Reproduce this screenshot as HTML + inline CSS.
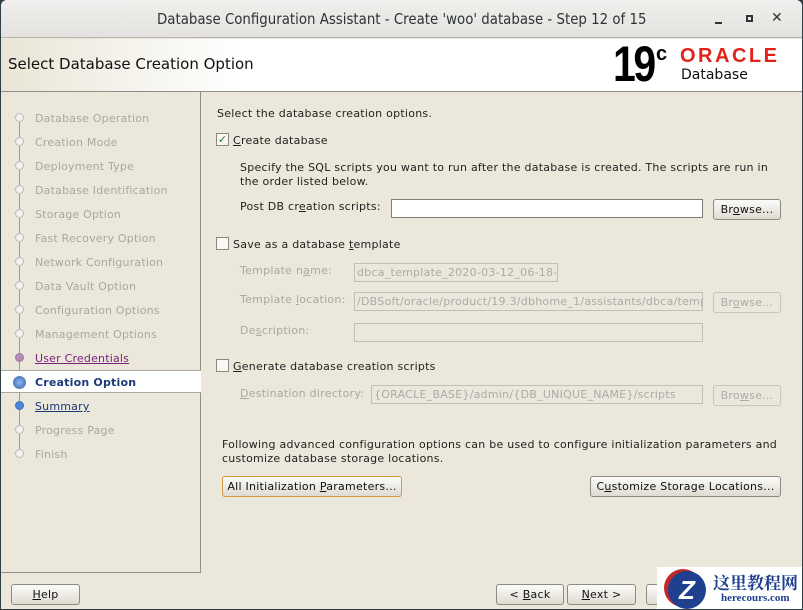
<!DOCTYPE html><html><head><style>
*{box-sizing:border-box;margin:0;padding:0}
body{width:803px;height:610px;background:#2f3f44;font-family:"DejaVu Sans",sans-serif;font-size:11px;color:#222;position:relative;overflow:hidden}
.win{position:absolute;left:1px;top:0;width:801px;height:609px;background:#ebe7da;border-radius:6px 6px 0 0;overflow:hidden}
.title{position:absolute;left:0;top:0;width:801px;height:38px;background:linear-gradient(#f0efed,#e3e2df);border-bottom:1px solid #b5b3ad;font-size:15px;color:#2e3436}
.hdr{position:absolute;left:0;top:39px;width:801px;height:53px;background:linear-gradient(90deg,#e9e5d6,#fff 30%,#fff);border-bottom:1px solid #8e8e8a}
.a{position:absolute;white-space:nowrap}
.c .a,.c .btn,.c .inpd{letter-spacing:0.25px}
.c .a{margin-top:1px}
.left{position:absolute;left:0;top:92px;width:200px;height:481px;border-right:1px solid #8e8e8a;border-bottom:1px solid #8e8e8a}
.step{position:absolute;left:34px;color:#aaa7a0;font-size:11px;letter-spacing:0.2px;margin-top:1px}
.dot{position:absolute;left:14px;width:9px;height:9px;border-radius:50%;border:1px solid #bbb;background:#f4f2ee}
.vline{position:absolute;left:18px;top:27px;width:1px;height:338px;background:#9a9a9a}
.btn{position:absolute;height:21px;border:1px solid #8d8a83;border-radius:3px;background:linear-gradient(#fbfbf9,#dedbd1);text-align:center;line-height:19px;color:#111}
.dis{color:#aaa;border-color:#c8c5bc;background:#ebe7da}
.inp{position:absolute;height:19px;border:1px solid #7f7d77;background:#fff}
.inpd{position:absolute;height:19px;border:1px solid #c2bfb6;color:#aaa;padding-left:2px;line-height:17px;overflow:hidden;white-space:nowrap}
.cb{position:absolute;width:13px;height:13px;border:1px solid #8b8880;background:#f8f7f4}
.g{color:#aaa8a0}
u{text-decoration:underline}
</style></head><body><div class="win">
<div class="title"><div class="a" style="left:156px;top:10px;transform:scaleX(.89);transform-origin:left">Database Configuration Assistant - Create 'woo' database - Step 12 of 15</div>
<div style="position:absolute;left:714px;top:22px;width:7px;height:2px;background:#2e3436"></div>
<div style="position:absolute;left:745px;top:15px;width:7px;height:7px;border:2px solid #2e3436"></div>
<div class="a" style="left:770px;top:10px;font-size:14px">✕</div></div>
<div class="hdr">
<div class="a" style="left:7px;top:16px;font-size:15px;color:#111">Select Database Creation Option</div>
<div class="a" style="left:612px;top:-4px;font-family:'Liberation Sans';font-size:50px;font-weight:bold;letter-spacing:-3px;color:#000;transform:scaleX(.82);transform-origin:left">19</div>
<div class="a" style="left:655px;top:4px;font-family:'Liberation Sans';font-size:20px;font-weight:bold;color:#000">c</div>
<div class="a" style="left:679px;top:6px;font-family:'Liberation Sans';font-size:20px;font-weight:bold;color:#e2231a;letter-spacing:2.5px">ORACLE</div>
<div class="a" style="left:680px;top:28px;font-size:14px;color:#111">Database</div>
</div>
<div class="left">
<div class="vline"></div>
<div class="dot" style="top:21px"></div><div class="step" style="top:19px">Database Operation</div>
<div class="dot" style="top:45px"></div><div class="step" style="top:43px">Creation Mode</div>
<div class="dot" style="top:69px"></div><div class="step" style="top:67px">Deployment Type</div>
<div class="dot" style="top:93px"></div><div class="step" style="top:91px">Database Identification</div>
<div class="dot" style="top:117px"></div><div class="step" style="top:115px">Storage Option</div>
<div class="dot" style="top:141px"></div><div class="step" style="top:139px">Fast Recovery Option</div>
<div class="dot" style="top:165px"></div><div class="step" style="top:163px">Network Configuration</div>
<div class="dot" style="top:189px"></div><div class="step" style="top:187px">Data Vault Option</div>
<div class="dot" style="top:213px"></div><div class="step" style="top:211px">Configuration Options</div>
<div class="dot" style="top:237px"></div><div class="step" style="top:235px">Management Options</div>
<div class="dot" style="top:261px;background:#b58ab5;border-color:#a07aa0"></div><div class="step" style="top:259px;color:#7a1f7a"><u>User Credentials</u></div>
<div style="position:absolute;left:0;top:278px;width:200px;height:23px;background:#fff;border-top:1px solid #a9a7a0;border-bottom:1px solid #a9a7a0"></div>
<div class="dot" style="top:284px;left:12px;width:13px;height:13px;background:radial-gradient(#8fb4ea,#3a6fc0);border-color:#5a7fb0"></div><div class="step" style="top:283px;color:#1b3a78;font-weight:bold">Creation Option</div>
<div class="dot" style="top:309px;background:#4a86d8;border-color:#3a6fc0"></div><div class="step" style="top:307px;color:#1b3a78"><u>Summary</u></div>
<div class="dot" style="top:333px"></div><div class="step" style="top:331px">Progress Page</div>
<div class="dot" style="top:357px"></div><div class="step" style="top:355px">Finish</div>
</div>
<div class="c">
<div class="a" style="left:216px;top:106px">Select the database creation options.</div>
<div class="cb" style="left:215px;top:133px;text-align:center;line-height:11px;color:#2a7a2a;font-size:11px">✓</div>
<div class="a" style="left:232px;top:133px"><u>C</u>reate database</div>
<div class="a" style="left:239px;top:160px;line-height:14px">Specify the SQL scripts you want to run after the database is created. The scripts are run in<br>the order listed below.</div>
<div class="a" style="left:239px;top:199px">Post DB cr<u>e</u>ation scripts:</div>
<div class="inp" style="left:390px;top:199px;width:312px"></div>
<div class="btn" style="left:712px;top:199px;width:68px">Br<u>o</u>wse...</div>
<div class="cb" style="left:215px;top:237px"></div>
<div class="a" style="left:232px;top:237px">Save as a database <u>t</u>emplate</div>
<div class="a g" style="left:239px;top:263px">Template n<u>a</u>me:</div>
<div class="inpd" style="left:353px;top:263px;width:204px">dbca_template_2020-03-12_06-18-4</div>
<div class="a g" style="left:239px;top:292px">Template <u>l</u>ocation:</div>
<div class="inpd" style="left:353px;top:292px;width:349px">/DBSoft/oracle/product/19.3/dbhome_1/assistants/dbca/temp</div>
<div class="btn dis" style="left:712px;top:292px;width:68px">Br<u>o</u>wse...</div>
<div class="a g" style="left:239px;top:323px">De<u>s</u>cription:</div>
<div class="inpd" style="left:353px;top:323px;width:349px"></div>
<div class="cb" style="left:215px;top:359px"></div>
<div class="a" style="left:232px;top:359px"><u>G</u>enerate database creation scripts</div>
<div class="a g" style="left:239px;top:386px"><u>D</u>estination directory:</div>
<div class="inpd" style="left:370px;top:385px;width:332px">{ORACLE_BASE}/admin/{DB_UNIQUE_NAME}/scripts</div>
<div class="btn dis" style="left:712px;top:385px;width:68px">Bro<u>w</u>se...</div>
<div class="a" style="left:221px;top:437px;line-height:14px">Following advanced configuration options can be used to configure initialization parameters and<br>customize database storage locations.</div>
<div class="btn" style="left:221px;top:476px;width:180px;border-color:#d49a40">All Initialization <u>P</u>arameters...</div>
<div class="btn" style="left:589px;top:476px;width:191px">C<u>u</u>stomize Storage Locations...</div>
<div class="btn" style="left:10px;top:584px;width:69px"><u>H</u>elp</div>
<div class="btn" style="left:495px;top:584px;width:68px">&lt; <u>B</u>ack</div>
<div class="btn" style="left:566px;top:584px;width:69px"><u>N</u>ext &gt;</div>
<div class="btn" style="left:645px;top:584px;width:40px"></div>
</div>
<div style="position:absolute;left:656px;top:567px;width:146px;height:43px;background:#fff"></div>
<div style="position:absolute;left:667px;top:571px;width:38px;height:38px;border-radius:50%;background:#1f3f8f;color:#fff;font:bold italic 26px 'Liberation Sans';text-align:center;line-height:38px;box-shadow:-4px -2px 0 #c0282b">Z</div>
<div class="a" style="left:712px;top:569px;font:bold 17px 'Noto Serif CJK SC',serif;color:#1f3f8f">这里教程网</div>
<div class="a" style="left:720px;top:592px;font:bold 11px 'Liberation Serif',serif;color:#1f3f8f">herecours.com</div>
</div></body></html>
